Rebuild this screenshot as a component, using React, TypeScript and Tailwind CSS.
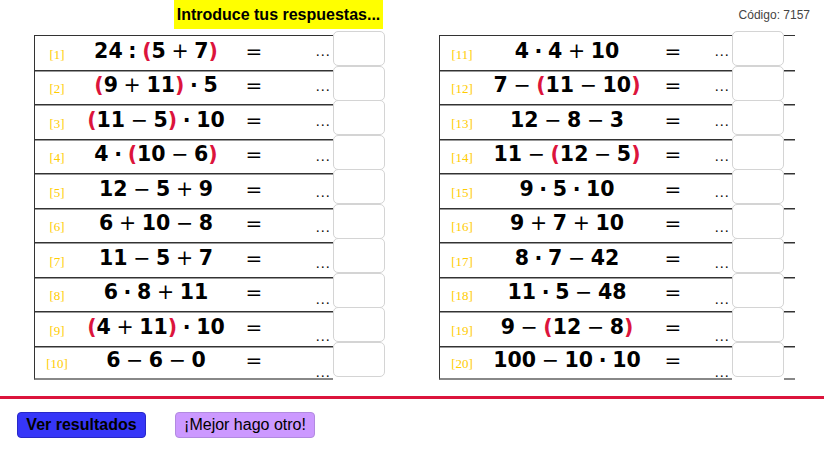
import React from "react"

const left = [
  "24 : (5 + 7)",
  "(9 + 11) · 5",
  "(11 − 5) · 10",
  "4 · (10 − 6)",
  "12 − 5 + 9",
  "6 + 10 − 8",
  "11 − 5 + 7",
  "6 · 8 + 11",
  "(4 + 11) · 10",
  "6 − 6 − 0",
]

const right = [
  "4 · 4 + 10",
  "7 − (11 − 10)",
  "12 − 8 − 3",
  "11 − (12 − 5)",
  "9 · 5 · 10",
  "9 + 7 + 10",
  "8 · 7 − 42",
  "11 · 5 − 48",
  "9 − (12 − 8)",
  "100 − 10 · 10",
]

// the dots drift down a little row by row
const dotsTop = [20, 20.5, 21, 21.5, 23, 23.5, 25, 26, 29, 30]

function Expr({ text }: { text: string }) {
  return (
    <span className="whitespace-pre font-['DejaVu_Sans',sans-serif] text-[20.5px] font-bold leading-none text-black [word-spacing:-1.5px]">
      {text.split("").map((c, i) => {
        if (c === "(" || c === ")")
          return (
            <span key={i} className="text-[#dc143c]">
              {c}
            </span>
          )
        if (c === "+" || c === "−")
          return (
            <span key={i} className="font-normal">
              {c}
            </span>
          )
        return <span key={i}>{c}</span>
      })}
    </span>
  )
}

function Table({ items, start, wide }: { items: string[]; start: number; wide: boolean }) {
  return (
    <div className="flex flex-col">
      {items.map((e, i) => {
        const last = i === items.length - 1
        const line = `border-t ${i === 0 ? "border-t-[#333]" : "border-t-[#333] shadow-[inset_0_1px_0_#999]"} ${
          last ? "border-b-2 border-b-[#888]" : ""
        }`
        return (
          <div key={i} className="flex h-[34.5px]">
            <div
              className={`flex ${wide ? "w-[293px]" : "w-[299px]"} border-l border-l-[#333] ${line}`}
            >
              <div className="flex w-[44px] items-center justify-center pt-[3px] font-['Liberation_Serif',serif] text-[13px] text-[#ffcc00]">
                [{start + i}]
              </div>
              <div
                className={`flex ${wide ? "w-[166px]" : "w-[154px]"} items-center justify-center pb-[4px]`}
              >
                <Expr text={e} />
              </div>
              <div
                className={`flex ${wide ? "w-[46px]" : "w-[42px]"} items-center justify-center pb-[4px] font-['DejaVu_Sans',sans-serif] text-[20px]`}
              >
                =
              </div>
              <div className="flex flex-1 justify-end pr-[2px]">
                <span
                  className="font-['Liberation_Serif',serif] text-[14px] leading-none tracking-[1.5px] text-black"
                  style={{ paddingTop: dotsTop[i] - 11 }}
                >
                  ...
                </span>
              </div>
            </div>
            <div className="relative -top-[4px] z-10 h-[35px] w-[52px] rounded-[5px] border-[1.5px] border-[#d4d4d4] bg-white" />
            {wide && <div className={`w-[11px] ${line}`} />}
          </div>
        )
      })}
    </div>
  )
}

export default function App() {
  return (
    <div className="h-[459px] w-[824px] overflow-hidden bg-white font-['Liberation_Sans',Arial,sans-serif]">
      <div className="flex h-[35px]">
        <div className="ml-[174px] flex h-[29px] w-[209px] items-center justify-center bg-[#ffff00] text-[16px] font-bold text-black">
          Introduce tus respuestas...
        </div>
        <div className="ml-auto mr-[14px] mt-[6px] text-[12px] text-[#444]">Código: 7157</div>
      </div>
      <div className="flex gap-[54px] pl-[34px]">
        <Table items={left} start={1} wide={false} />
        <Table items={right} start={11} wide={true} />
      </div>
      <div className="mt-[16px] h-[3px] w-full bg-[#dc143c]" />
      <div className="mt-[13px] flex gap-[29px] pl-[17px]">
        <button className="h-[26px] w-[129px] rounded-[4px] border border-[#2828c8] bg-[#3636f8] text-[16px] font-bold text-black">
          Ver resultados
        </button>
        <button className="h-[26px] w-[140px] rounded-[4px] border border-[#b28ae0] bg-[#cc99ff] text-[16px] text-black">
          ¡Mejor hago otro!
        </button>
      </div>
    </div>
  )
}
